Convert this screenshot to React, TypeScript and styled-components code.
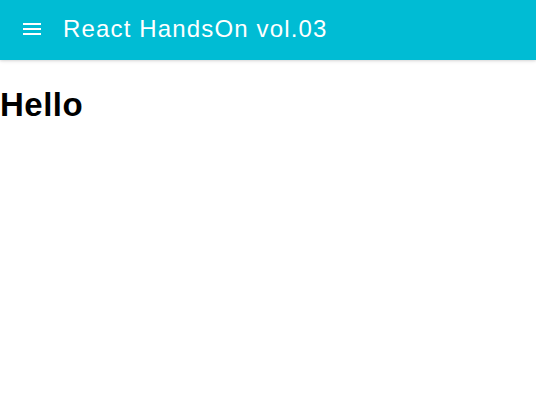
import React from "react";
import styled, { createGlobalStyle } from "styled-components";

const Global = createGlobalStyle`
  html, body { margin: 0; padding: 0; background: #fff; }
  body { font-family: "Liberation Sans", Arial, sans-serif; }
`;

const Bar = styled.header`
  display: flex;
  align-items: center;
  height: 60px;
  padding: 0 20px;
  background: #00bcd4;
  box-shadow: 0 1px 4px rgba(0, 0, 0, 0.1), 0 1px 2px rgba(0, 0, 0, 0.08);
  box-sizing: border-box;
  position: relative;
  z-index: 1;
`;

const MenuButton = styled.button`
  display: flex;
  align-items: center;
  justify-content: center;
  width: 24px;
  height: 24px;
  padding: 0;
  margin: 0 19px 2px 0;
  border: none;
  background: none;
  color: #fff;
  cursor: pointer;
`;

const Title = styled.h1`
  margin: 0 0 2px 0;
  font-size: 24px;
  font-weight: 400;
  color: #fff;
  line-height: 1;
  letter-spacing: 1.15px;
`;

const Main = styled.main`
  padding: 0;
`;

const Heading = styled.h1`
  margin: 26px 0 0 0;
  font-size: 33px;
  font-weight: 700;
  color: #000;
  line-height: 37px;
  letter-spacing: 0.5px;
`;

const MenuIcon = () => (
  <svg width="24" height="24" viewBox="0 0 24 24" fill="currentColor">
    <path d="M3 18h18v-2H3v2zm0-5h18v-2H3v2zm0-7v2h18V6H3z" />
  </svg>
);

export default function App() {
  return (
    <>
      <Global />
      <Bar>
        <MenuButton aria-label="menu">
          <MenuIcon />
        </MenuButton>
        <Title>React HandsOn vol.03</Title>
      </Bar>
      <Main>
        <Heading>Hello</Heading>
      </Main>
    </>
  );
}
